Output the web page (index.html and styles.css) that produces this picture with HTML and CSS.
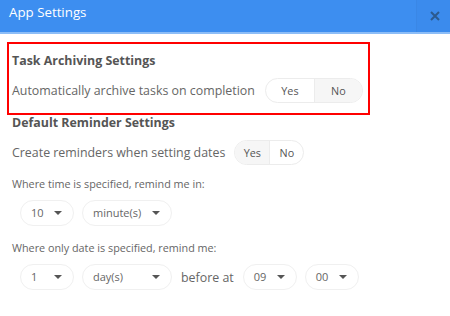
FILE: index.html
```html
<!DOCTYPE html>
<html lang="en">
<head>
    <meta charset="UTF-8">
    <title>App Settings</title>
    <link rel="stylesheet" href="styles.css">
</head>
<body>
    <header class="modal-header">
        <div class="modal-title">App Settings</div>
        <div class="close-btn">
            <svg width="10" height="10" viewBox="0 0 10 10">
                <path d="M1 1L9 9M9 1L1 9" stroke="#2c5a8f" stroke-width="2"/>
            </svg>
        </div>
    </header>

    <div class="modal-body">
        <section class="group highlighted">
            <h2>Task Archiving Settings</h2>
            <div class="row">
                <span class="label">Automatically archive tasks on completion</span>
                <div class="toggle">
                    <span class="opt">Yes</span>
                    <span class="opt active">No</span>
                </div>
            </div>
        </section>

        <section class="group reminders">
            <h2>Default Reminder Settings</h2>
            <div class="row">
                <span class="label">Create reminders when setting dates</span>
                <div class="toggle small">
                    <span class="opt active">Yes</span>
                    <span class="opt">No</span>
                </div>
            </div>

            <p class="hint">Where time is specified, remind me in:</p>
            <div class="selects">
                <div class="select w-num">10</div>
                <div class="select w-unit">minute(s)</div>
            </div>

            <p class="hint spaced">Where only date is specified, remind me:</p>
            <div class="selects">
                <div class="select w-num">1</div>
                <div class="select w-unit">day(s)</div>
                <span class="label">before at</span>
                <div class="select w-num">09</div>
                <div class="select w-num">00</div>
            </div>
        </section>
    </div>
</body>
</html>
```

FILE: styles.css
```css
* {
    margin: 0;
    padding: 0;
    box-sizing: border-box;
    font-family: "Open Sans", Arial, sans-serif;
}

body {
    background-color: #fff;
    width: 450px;
}

/* Header */
.modal-header {
    display: flex;
    justify-content: space-between;
    height: 34px;
    background-color: #3d8ef0;
    border-bottom: 2px solid #8cbdf7;
}

.modal-title {
    color: #fff;
    font-size: 13.3px;
    line-height: 25px;
    padding-left: 9px;
}

.close-btn {
    display: flex;
    justify-content: center;
    align-items: center;
    width: 34px;
    padding-left: 2px;
    border-left: 1px solid #3a87e6;
    background-color: #3b8bed;
}

/* Body */
.modal-body {
    padding: 8px 0 0 7px;
}

.group {
    width: 363px;
    padding: 0 5px;
}

.highlighted {
    border: 2px solid #f00;
    padding: 7px 3px 10px 3px;
}

.reminders {
    margin-top: -2px;
}

.group h2 {
    font-size: 12.4px;
    font-weight: bold;
    color: #555;
    line-height: 20px;
}

.row {
    display: flex;
    align-items: center;
    gap: 10px;
    margin-top: 7px;
}

.label {
    font-size: 12.4px;
    color: #666;
}

.toggle {
    display: flex;
    height: 25px;
    border: 1px solid #ececec;
    border-radius: 13px;
    overflow: hidden;
}

.toggle .opt {
    width: 48px;
    font-size: 10.8px;
    color: #555;
    line-height: 23px;
    text-align: center;
}

.toggle .opt + .opt {
    border-left: 1px solid #ececec;
}

.toggle .opt.active {
    background-color: #f6f6f6;
}

.small {
    margin-left: -1px;
}

.toggle.small .opt {
    width: 34px;
}

.hint {
    font-size: 10.8px;
    color: #666;
    line-height: 16px;
    margin-top: 11px;
}

.hint.spaced {
    margin-top: 14px;
}

.selects {
    display: flex;
    align-items: center;
    gap: 8px;
    margin-top: 8px;
    padding-left: 8px;
}

.selects .label {
    margin: 0 1px;
}

.select {
    position: relative;
    height: 26px;
    border: 1px solid #f0f0f0;
    border-radius: 13px;
    font-size: 11px;
    color: #666;
    line-height: 24px;
    padding-left: 10px;
}

.select::after {
    content: "";
    position: absolute;
    right: 11px;
    top: 10px;
    border-left: 4px solid transparent;
    border-right: 4px solid transparent;
    border-top: 4px solid #555;
}

.w-num {
    width: 54px;
}

.w-unit {
    width: 90px;
}
```
